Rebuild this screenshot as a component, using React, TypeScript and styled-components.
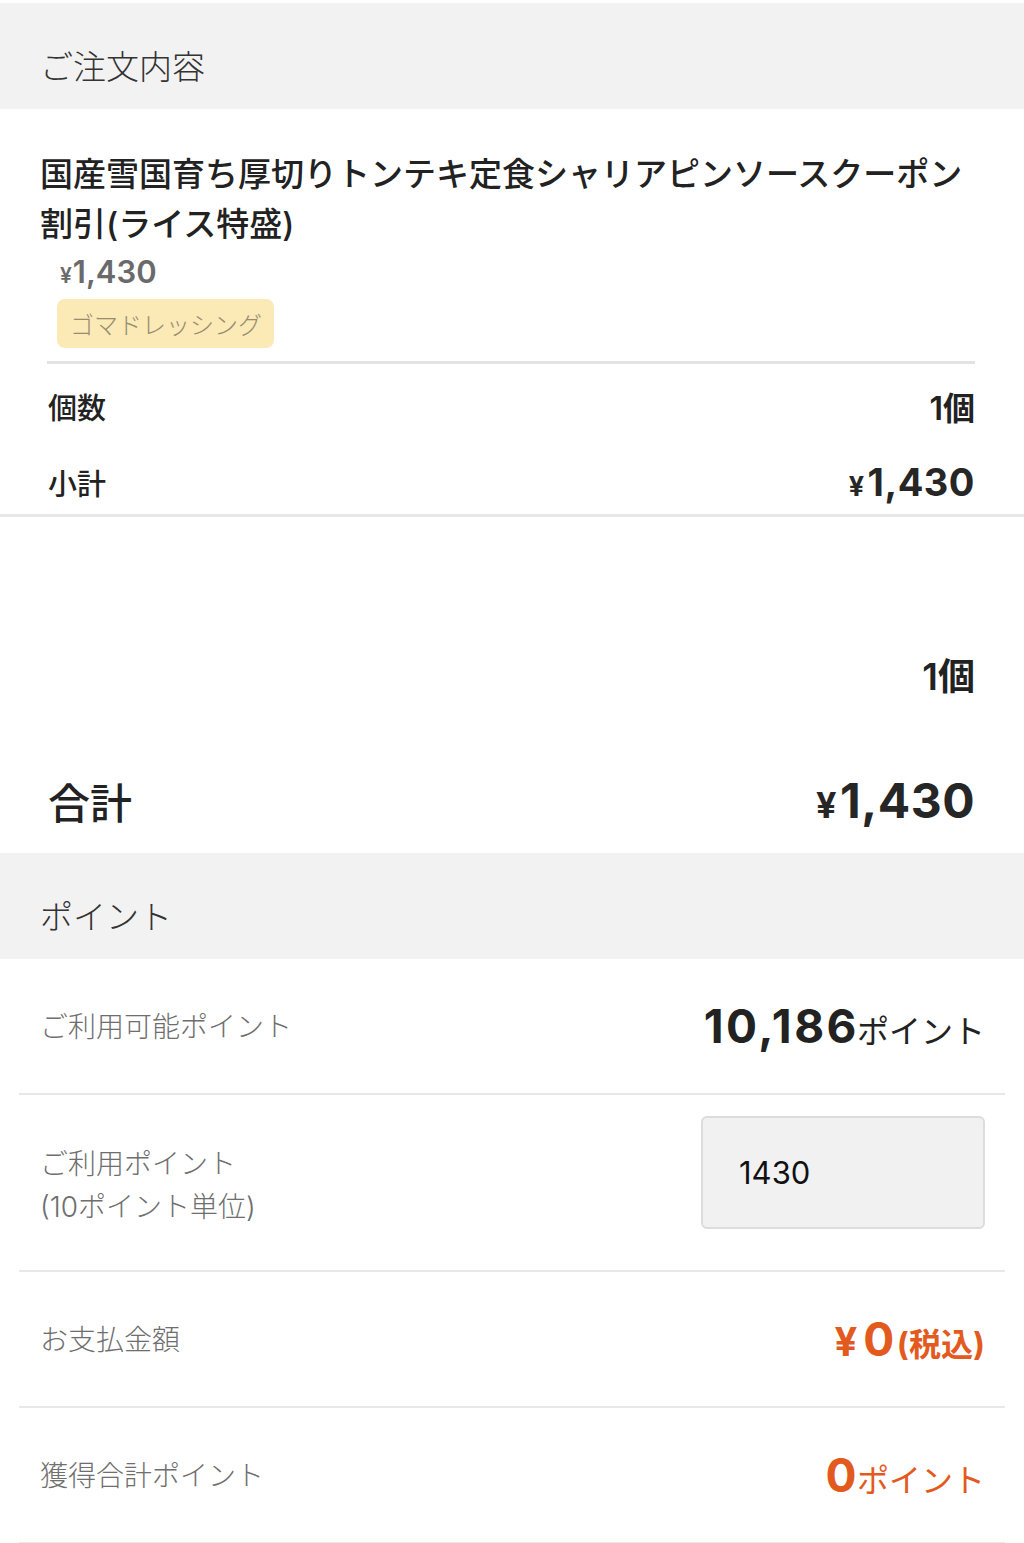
import styled, { createGlobalStyle } from 'styled-components'

const GlobalStyle = createGlobalStyle`
  html, body {
    margin: 0;
    padding: 0;
    background: #fff;
  }
  body {
    font-family: Inter, "Noto Sans CJK JP", sans-serif;
    color: #222;
  }
  * { box-sizing: border-box; }
`

const orange = '#e35a1e'

export default function App() {
  return (
    <>
      <GlobalStyle />
      <Page>
        <SectionHeader>ご注文内容</SectionHeader>

        <ItemBlock>
          <ItemTitle>国産雪国育ち厚切りトンテキ定食シャリアピンソースクーポン割引(ライス特盛)</ItemTitle>
          <ItemPrice><Yen size={21}>¥</Yen>1,430</ItemPrice>
          <OptionTag>ゴマドレッシング</OptionTag>
        </ItemBlock>

        <DetailBlock>
          <Divider />
          <DetailRows>
            <DetailRow>
              <DetailLabel>個数</DetailLabel>
              <DetailValue>1個</DetailValue>
            </DetailRow>
            <DetailRow>
              <DetailLabel>小計</DetailLabel>
              <Amount size={38}><Yen size={27} gap={3}>¥</Yen>1,430</Amount>
            </DetailRow>
          </DetailRows>
        </DetailBlock>
        <FullDivider />

        <TotalSection>
          <QtyRow>1個</QtyRow>
          <TotalRow>
            <TotalLabel>合計</TotalLabel>
            <Amount size={48}><Yen size={36} gap={3}>¥</Yen>1,430</Amount>
          </TotalRow>
        </TotalSection>

        <SectionHeader>ポイント</SectionHeader>

        <PointList>
          <PointRow>
            <PointLabel>ご利用可能ポイント</PointLabel>
            <PointValue>
              <Digits>10,186</Digits>
              <Unit>ポイント</Unit>
            </PointValue>
          </PointRow>
          <PointRow tall>
            <PointLabel two>
              ご利用ポイント
              <br />
              (10ポイント単位)
            </PointLabel>
            <PointInput defaultValue="1430" inputMode="numeric" />
          </PointRow>
          <PointRow>
            <PointLabel>お支払金額</PointLabel>
            <PointValue accent>
              <Yen size={40} gap={6}>¥</Yen>
              <Digits>0</Digits>
              <TaxNote>(税込)</TaxNote>
            </PointValue>
          </PointRow>
          <PointRow>
            <PointLabel>獲得合計ポイント</PointLabel>
            <PointValue accent>
              <Digits>0</Digits>
              <Unit>ポイント</Unit>
            </PointValue>
          </PointRow>
        </PointList>
      </Page>
    </>
  )
}

const Page = styled.div`
  width: 1024px;
  padding-top: 3px;
  background: #fff;
`
const SectionHeader = styled.div`
  height: 106px;
  padding: 44px 40px 0;
  background: #f2f2f2;
  font-size: 33px;
  line-height: 40px;
  font-weight: 300;
  color: #333;
`
const ItemBlock = styled.div`
  padding: 40px 40px 0;
`
const ItemTitle = styled.div`
  font-size: 33px;
  line-height: 50px;
  font-weight: 500;
  color: #222;
`
const ItemPrice = styled.div`
  margin: 3px 0 0 20px;
  font-size: 31px;
  line-height: 40px;
  font-weight: 600;
  color: #6a6a6a;
`
const Yen = styled.span<{ size: number; gap?: number }>`
  font-size: ${({ size }) => size}px;
  margin-right: ${({ gap }) => gap ?? 1}px;
`
const OptionTag = styled.div`
  display: inline-flex;
  align-items: center;
  height: 49px;
  margin: 3px 0 0 17px;
  padding: 0 12px 0 13px;
  border-radius: 8px;
  background: #fbe9b6;
  color: #978b70;
  font-size: 24px;
  font-weight: 300;
`
const DetailBlock = styled.div`
  padding: 13px 49px 0 47px;
`
const Divider = styled.div`
  height: 3px;
  background: #e3e3e3;
`
const DetailRows = styled.div`
  display: flex;
  flex-direction: column;
  gap: 12px;
  padding: 10px 0 0 1px;
`
const DetailRow = styled.div`
  display: flex;
  justify-content: space-between;
  align-items: center;
  height: 64px;
`
const DetailLabel = styled.span`
  font-size: 29px;
  font-weight: 500;
  color: #222;
`
const DetailValue = styled.span`
  font-size: 32px;
  font-weight: 600;
  color: #222;
`
const Amount = styled.span<{ size: number }>`
  font-size: ${({ size }) => size}px;
  font-weight: 700;
  color: #262626;
  letter-spacing: 0.5px;
`
const FullDivider = styled.div`
  height: 3px;
  background: #e8e8e8;
`
const TotalSection = styled.div`
  display: flex;
  flex-direction: column;
  gap: 62px;
  padding: 125px 49px 21px 48px;
`
const QtyRow = styled.div`
  display: flex;
  justify-content: flex-end;
  align-items: center;
  height: 64px;
  font-size: 37px;
  font-weight: 600;
  color: #222;
`
const TotalRow = styled.div`
  display: flex;
  justify-content: space-between;
  align-items: center;
  height: 64px;
`
const TotalLabel = styled.span`
  font-size: 42px;
  font-weight: 500;
  color: #222;
`
const PointList = styled.div`
  padding: 0 19px;
`
const PointRow = styled.div<{ tall?: boolean }>`
  display: flex;
  justify-content: space-between;
  align-items: center;
  min-height: ${({ tall }) => (tall ? 177 : 136)}px;
  padding: 0 20px 0 21px;
  border-bottom: 2px solid #e8e8e8;
`
const PointLabel = styled.div<{ two?: boolean }>`
  font-size: 28px;
  line-height: 43px;
  font-weight: 300;
  color: #6e6e6e;
  margin-top: ${({ two }) => (two ? 6 : 3)}px;
`
const PointValue = styled.div<{ accent?: boolean }>`
  display: flex;
  align-items: baseline;
  margin-right: 0;
  color: ${({ accent }) => (accent ? orange : '#222')};
  font-weight: 700;
`
const Digits = styled.span`
  font-size: 46px;
  font-weight: 700;
  letter-spacing: 2.5px;
`
const Unit = styled.span`
  font-size: 32px;
  font-weight: 400;
  margin-left: -2px;
`
const TaxNote = styled.span`
  font-size: 32px;
  font-weight: 700;
  margin-left: 0;
`
const PointInput = styled.input`
  width: 284px;
  height: 113px;
  margin-bottom: 21px;
  padding: 0 0 0 36px;
  border: 2px solid #dcdcdc;
  border-radius: 6px;
  background: #f1f1f1;
  font-family: Inter, "Noto Sans CJK JP", sans-serif;
  font-size: 31px;
  color: #111;
  outline: none;
`
